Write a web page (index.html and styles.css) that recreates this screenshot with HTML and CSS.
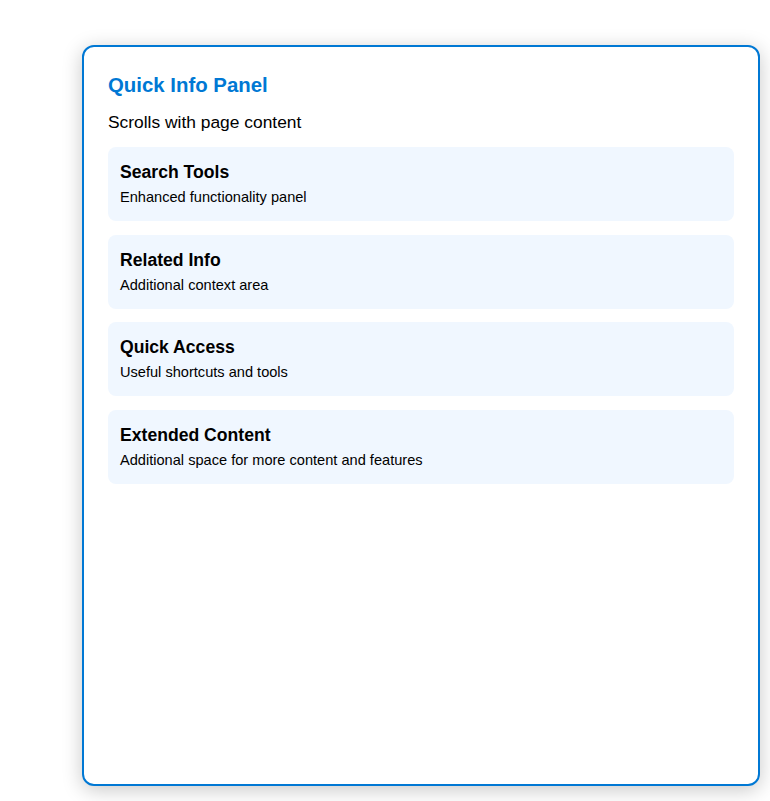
FILE: index.html
```html
<!DOCTYPE html>
<html>
<head>
<meta charset="utf-8">
<link rel="stylesheet" href="styles.css">
</head>
<body>
<aside class="panel">
  <h3 class="panel-title">Quick Info Panel</h3>
  <p class="panel-sub">Scrolls with page content</p>
  <div class="cards">
    <div class="card">
      <h4 class="card-title">Search Tools</h4>
      <p class="card-text">Enhanced functionality panel</p>
    </div>
    <div class="card">
      <h4 class="card-title">Related Info</h4>
      <p class="card-text">Additional context area</p>
    </div>
    <div class="card">
      <h4 class="card-title">Quick Access</h4>
      <p class="card-text">Useful shortcuts and tools</p>
    </div>
    <div class="card">
      <h4 class="card-title">Extended Content</h4>
      <p class="card-text">Additional space for more content and features</p>
    </div>
  </div>
</aside>
</body>
</html>
```

FILE: styles.css
```css
html, body {
  margin: 0;
  padding: 0;
  background: #ffffff;
  font-family: "Liberation Sans", Arial, sans-serif;
  color: #000;
}
body {
  padding: 45px 0 0 82px;
  overflow: hidden;
  height: 801px;
  box-sizing: border-box;
}
.panel {
  box-sizing: border-box;
  width: 678px;
  height: 741px;
  border: 2px solid #0078d4;
  border-radius: 12px;
  padding: 26px 24px 24px;
  background: #fff;
  box-shadow: 0 4px 20px rgba(0, 0, 0, 0.22);
}
.panel-title {
  margin: 0 0 15px;
  font-size: 20.4px;
  line-height: 24px;
  font-weight: bold;
  color: #0078d4;
}
.panel-sub {
  margin: 0 0 15px;
  font-size: 17.4px;
  line-height: 20px;
}
.cards {
  display: flex;
  flex-direction: column;
  gap: 13.6px;
}
.card {
  background: #f0f7ff;
  border-radius: 8px;
  padding: 15px 12px 15px;
}
.card-title {
  margin: 0 0 7px;
  font-size: 17.6px;
  line-height: 20px;
  font-weight: bold;
}
.card-text {
  margin: 0;
  font-size: 14.6px;
  line-height: 17px;
}
```
